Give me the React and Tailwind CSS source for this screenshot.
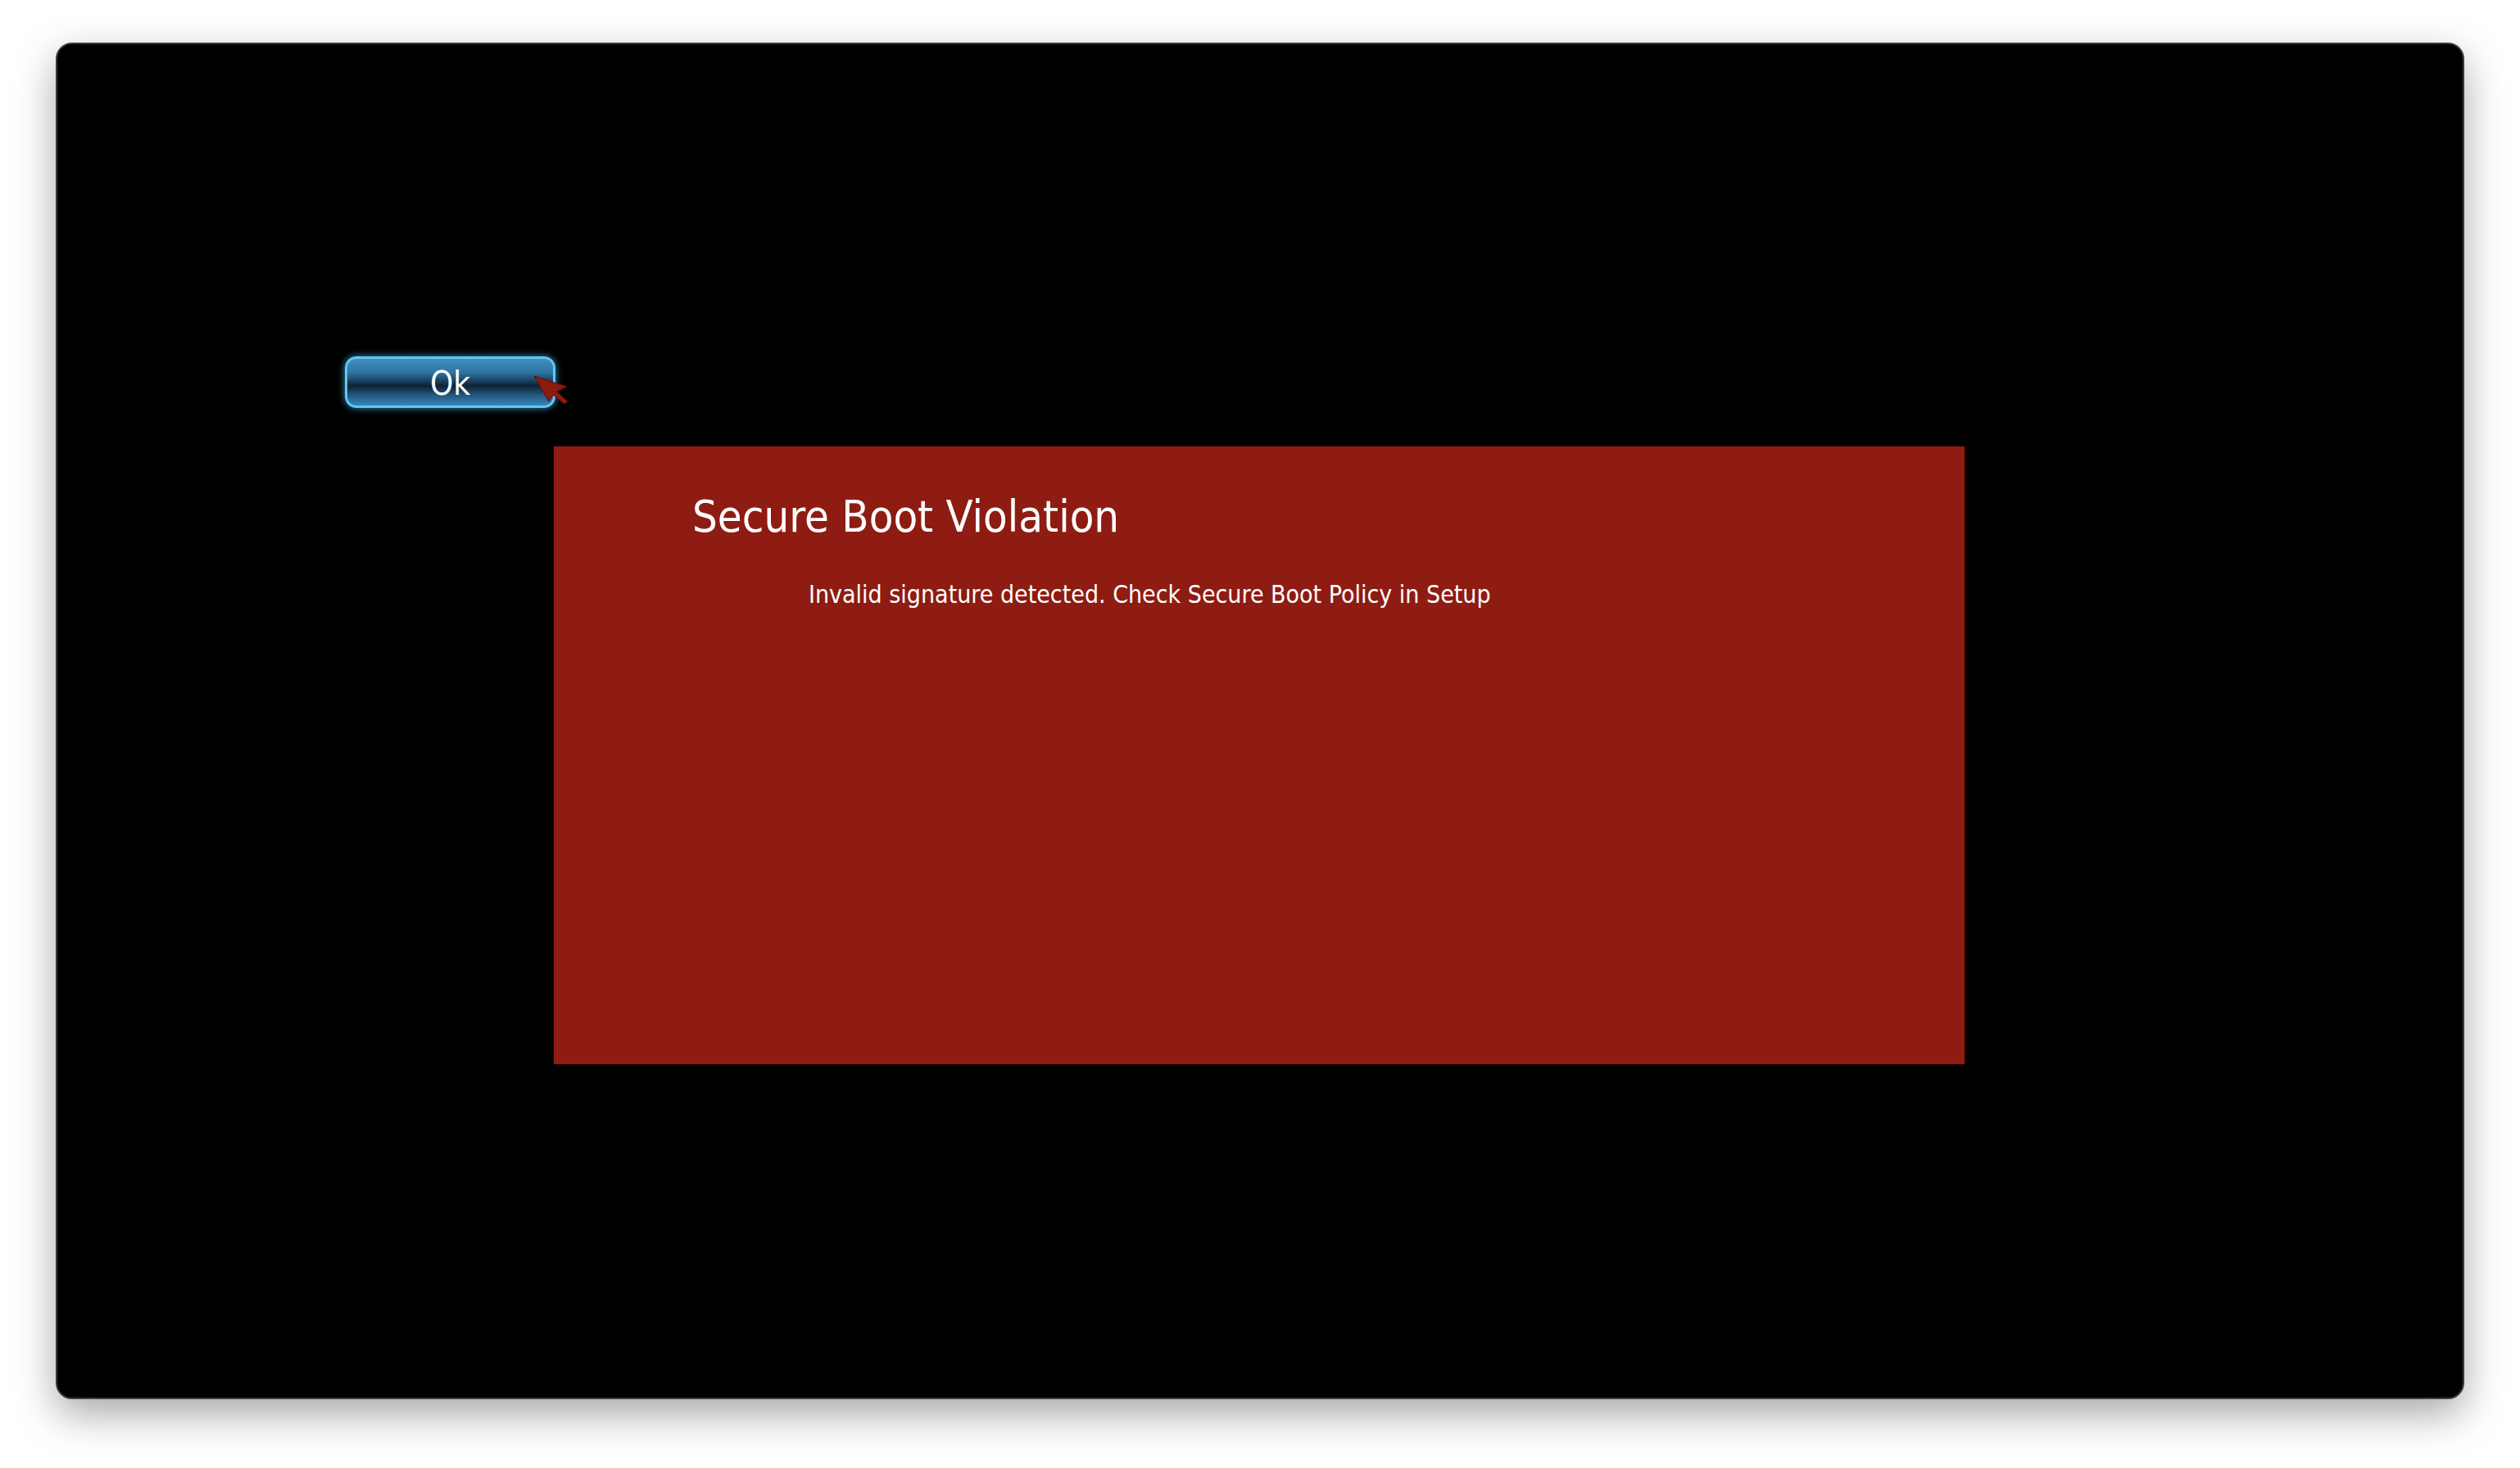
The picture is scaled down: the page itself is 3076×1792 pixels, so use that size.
import React from 'react'

export default function App() {
  return (
    <div className="w-[3076px] h-[1792px] bg-white pl-[68px] pt-[52px]" style={{ fontFamily: '"DejaVu Sans Condensed", "DejaVu Sans", sans-serif' }}>
      <div className="w-[2940px] h-[1656px] bg-black rounded-[20px] border-2 border-[#3a3a3a] shadow-[0_18px_50px_rgba(0,0,0,0.35)] pt-[381px] pl-[351px] flex flex-col">
        <div className="relative w-[257px]">
          <button className="w-[257px] h-[63px] rounded-[14px] border-[3px] border-[#63c6f2] shadow-[0_0_8px_rgba(70,180,235,0.8)] bg-[linear-gradient(to_bottom,#4090c2_0%,#2f73a0_30%,#0d2235_58%,#22587f_78%,#3786b8_100%)] text-white text-[40px] leading-none flex items-center justify-center pt-[3px]">
            Ok
          </button>
          <svg className="absolute left-[229px] top-[21px]" width="46" height="40" viewBox="0 0 46 40">
            <polygon points="2,3 42,16 29,22 43,34 39,37 25,26 20,34" fill="#8e1a10" stroke="#5e0c06" strokeWidth="1" />
          </svg>
        </div>
        <div className="ml-[255px] mt-[47px] w-[1722px] h-[754px] bg-[#8e1c12] shadow-[0_0_4px_rgba(60,0,0,0.9)] pl-[169px] pt-[59px]">
          <h1 className="text-white text-[54px] leading-none font-normal">Secure Boot Violation</h1>
          <p className="text-white text-[30px] leading-none mt-[53px] ml-[142px]">Invalid signature detected. Check Secure Boot Policy in Setup</p>
        </div>
      </div>
    </div>
  )
}
